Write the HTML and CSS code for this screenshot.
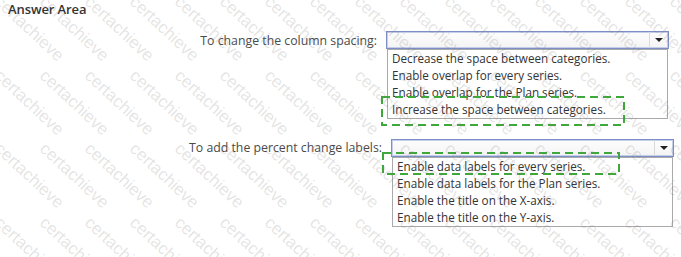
FILE: index.html
```html
<!DOCTYPE html>
<html lang="en">

<head>
    <meta charset="UTF-8">
    <meta name="viewport" content="width=device-width, initial-scale=1.0">
    <title>Answer Area</title>
    <link rel="stylesheet" href="styles.css">
</head>

<body>
    <div class="page">
        <div class="title">Answer Area</div>

        <div class="item item-spacing">
            <span class="prompt">To change the column spacing:</span>
            <div class="picker">
                <div class="select"><span class="arrow"></span></div>
                <ul class="options">
                    <li>Decrease the space between categories.</li>
                    <li>Enable overlap for every series.</li>
                    <li>Enable overlap for the Plan series.</li>
                    <li>Increase the space between categories.</li>
                </ul>
            </div>
        </div>

        <div class="item item-labels">
            <span class="prompt">To add the percent change labels:</span>
            <div class="picker">
                <div class="select"><span class="arrow"></span></div>
                <ul class="options">
                    <li>Enable data labels for every series.</li>
                    <li>Enable data labels for the Plan series.</li>
                    <li>Enable the title on the X-axis.</li>
                    <li>Enable the title on the Y-axis.</li>
                </ul>
            </div>
        </div>

        <!-- answer marks -->
        <svg class="mark mark-spacing" width="244" height="30" viewBox="0 0 244 30">
            <rect x="1" y="1" width="242" height="28" />
        </svg>
        <svg class="mark mark-labels" width="238" height="23" viewBox="0 0 238 23">
            <rect x="1" y="1" width="236" height="21" />
        </svg>

        <div class="watermark" id="watermark"></div>
    </div>

    <script src="./index.js"></script>
</body>

</html>
```

FILE: index.js
```js
const watermark = document.getElementById('watermark');

for (let i = 0; i < 16 * 5; i++) {
    const cell = document.createElement('div');
    cell.className = 'wm-cell';
    const word = document.createElement('span');
    word.textContent = 'certachieve';
    cell.appendChild(word);
    watermark.appendChild(cell);
}
```

FILE: styles.css
```css
* {
    margin: 0;
    padding: 0;
    box-sizing: border-box;
}

body {
    font-family: 'Open Sans', 'Noto Sans', sans-serif;
    background: #ffffff;
    color: #333333;
    width: 681px;
    height: 257px;
    overflow: hidden;
}

.page {
    position: relative;
    width: 681px;
    height: 257px;
    overflow: hidden;
}

.title {
    font-size: 13px;
    font-weight: 600;
    color: #333333;
    line-height: 16px;
    padding: 1px 0 0 8px;
    letter-spacing: -0.1px;
}

.item {
    display: flex;
    align-items: flex-start;
}

.item-spacing {
    margin-top: 14px;
}

.item-labels {
    margin-top: 20px;
}

.prompt {
    text-align: right;
    font-size: 12.3px;
    line-height: 18px;
    color: #4a4a4a;
    padding-right: 9px;
    white-space: nowrap;
}

.item-spacing .prompt {
    width: 386px;
    padding-top: 1px;
}

.item-labels .prompt {
    width: 391px;
}

.picker {
    width: 283px;
}

.select {
    height: 18px;
    border: 1px solid #7d8fc6;
    box-shadow: inset 0 0 0 1px #c5cee9;
    background: linear-gradient(#fdfdfd, #f4f4f4);
    display: flex;
    justify-content: flex-end;
}

.arrow {
    width: 19px;
    height: 100%;
    border-left: 1px solid #dadada;
    display: flex;
    justify-content: center;
    align-items: center;
}

.arrow::after {
    content: '';
    border-left: 4px solid transparent;
    border-right: 4px solid transparent;
    border-top: 4px solid #222222;
}

.options {
    list-style: none;
    margin: 0 1px;
    border: 1px solid #a9a9a9;
    background: #ffffff;
}

.options li {
    font-size: 11.7px;
    line-height: 17px;
    height: 17px;
    padding-left: 4px;
    color: #333333;
    white-space: nowrap;
}

.mark {
    position: absolute;
    z-index: 2;
}

.mark rect {
    fill: none;
    stroke: #3fa83a;
    stroke-width: 2;
    stroke-dasharray: 8 5;
}

.mark-spacing {
    left: 381px;
    top: 96px;
}

.mark-labels {
    left: 382px;
    top: 152px;
}

.watermark {
    position: absolute;
    left: 0;
    top: -4px;
    width: 720px;
    display: flex;
    flex-wrap: wrap;
    pointer-events: none;
    z-index: 3;
}

.wm-cell {
    width: 45px;
    height: 73.5px;
    position: relative;
}

.wm-cell span {
    position: absolute;
    left: 4px;
    top: -4px;
    font-family: 'Liberation Sans', Arial, sans-serif;
    font-size: 17px;
    color: rgba(120, 120, 120, 0.2);
    transform: rotate(43deg);
    transform-origin: 0 0;
    white-space: nowrap;
}
```
